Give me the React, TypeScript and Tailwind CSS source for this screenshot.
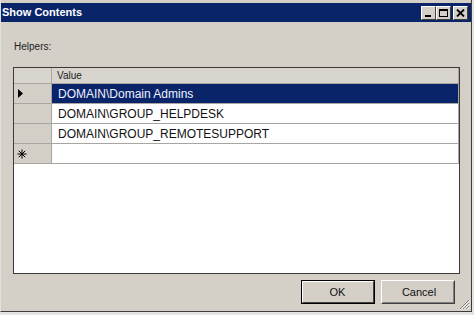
import React from "react";

const font = { fontFamily: '"Liberation Sans", Arial, sans-serif' };

function TitleBtn({ children, className = "" }: { children: React.ReactNode; className?: string }) {
  return (
    <div
      className={
        "w-[15px] h-[14px] shrink-0 bg-[#d4d0c8] border-t border-l border-t-white border-l-white border-r border-b border-r-[#404040] border-b-[#404040] flex items-center justify-center " +
        className
      }
    >
      {children}
    </div>
  );
}

function Button({ label, def = false }: { label: string; def?: boolean }) {
  return (
    <div
      className={
        "w-[74px] h-[24px] shrink-0 " +
        (def ? "border border-black " : "border border-t-white border-l-white border-r-[#404040] border-b-[#404040] ")
      }
    >
      <div
        className={
          "w-full h-full flex items-center justify-center bg-[#d4d0c8] text-[11px] text-[#111] " +
          (def
            ? "border border-t-white border-l-white border-r-[#404040] border-b-[#404040]"
            : "border border-t-[#d4d0c8] border-l-[#d4d0c8] border-r-[#808080] border-b-[#808080]")
        }
      >
        <span className={def ? "pr-[1px]" : "pl-[2px]"}>{label}</span>
      </div>
    </div>
  );
}

const rows = ["DOMAIN\\Domain Admins", "DOMAIN\\GROUP_HELPDESK", "DOMAIN\\GROUP_REMOTESUPPORT"];

export default function App() {
  return (
    <div className="w-[474px] h-[315px] bg-[#e4e4e4] overflow-hidden flex items-start" style={font}>
      <div className="w-[472px] h-[312px] shrink-0 flex flex-col bg-[#d4d0c8] border-r border-b border-[#3c3c3c] border-l border-l-[#e2e0dc]">
        <div className="h-[3px] shrink-0" />
        <div className="h-[19px] shrink-0 bg-[#0a246a] flex items-center justify-between pl-[1px] pr-[3px]">
          <span className="text-white font-bold text-[11px] leading-none">Show Contents</span>
          <div className="flex items-center">
            <TitleBtn>
              <div className="w-[6px] h-[2px] bg-black mt-[6px] mr-[2px]" />
            </TitleBtn>
            <TitleBtn>
              <div className="w-[9px] h-[8px] border border-black border-t-2" />
            </TitleBtn>
            <TitleBtn className="ml-[2px]">
              <svg width="9" height="8" viewBox="0 0 9 8">
                <path d="M1 0.5 L8 7.5 M8 0.5 L1 7.5" stroke="black" strokeWidth="1.8" />
              </svg>
            </TitleBtn>
          </div>
        </div>
        <div className="flex-1 min-h-0 flex flex-col">
          <div className="shrink-0 mt-[19px] ml-[13px] h-[12px] text-[10px] leading-[12px] text-[#222]">Helpers:</div>
          <div className="shrink-0 mt-[14px] ml-[12px] w-[447px] h-[207px] border border-[#3a3a3a] bg-white flex flex-col">
            <div className="flex h-[16px] shrink-0 border-b border-[#a8a6a0] bg-[#d8d5cf]">
              <div className="w-[38px] border-r border-[#a8a6a0]" />
              <div className="flex-1 border-r border-[#a8a6a0] pl-[5px] text-[10px] leading-[15px] text-[#222]">Value</div>
            </div>
            {rows.map((r, i) => (
              <div key={r} className="flex h-[20px] shrink-0">
                <div className="w-[38px] bg-[#d4d0c8] border-r border-b border-[#a8a6a0] flex items-center pl-[4px]">
                  {i === 0 && (
                    <svg width="5" height="9" viewBox="0 0 5 9">
                      <path d="M0 0 L5 4.5 L0 9 Z" fill="black" />
                    </svg>
                  )}
                </div>
                <div
                  className={
                    "flex-1 border-r border-b border-[#a8a6a0] flex items-center pl-[6px] text-[12px] " +
                    (i === 0 ? "bg-[#0a246a] text-[#eef2ff]" : "text-[#111]")
                  }
                >
                  {r}
                </div>
              </div>
            ))}
            <div className="flex h-[20px] shrink-0">
              <div className="w-[38px] bg-[#d4d0c8] border-r border-b border-[#a8a6a0] flex items-center pl-[3px]">
                <svg width="10" height="10" viewBox="0 0 10 10">
                  <path
                    d="M5 0.5 V9.5 M0.5 5 H9.5 M1.8 1.8 L8.2 8.2 M8.2 1.8 L1.8 8.2"
                    stroke="black"
                    strokeWidth="1"
                  />
                </svg>
              </div>
              <div className="flex-1 border-r border-b border-[#a8a6a0]" />
            </div>
          </div>
          <div className="flex-1 min-h-0 flex justify-end">
            <div className="flex gap-[6px] mt-[6px]">
              <Button label="OK" def />
              <Button label="Cancel" />
            </div>
            <div className="self-end ml-[4px] mr-[1px] mb-[1px]">
              <svg width="11" height="11" viewBox="0 0 11 11" className="block">
                <path d="M10 1 L1 10 M10 4 L4 10 M10 7 L7 10" stroke="#808080" strokeWidth="1" />
                <path d="M10.5 2 L2 10.5 M10.5 5 L5 10.5 M10.5 8 L8 10.5" stroke="white" strokeWidth="1" />
              </svg>
            </div>
          </div>
        </div>
      </div>
    </div>
  );
}
